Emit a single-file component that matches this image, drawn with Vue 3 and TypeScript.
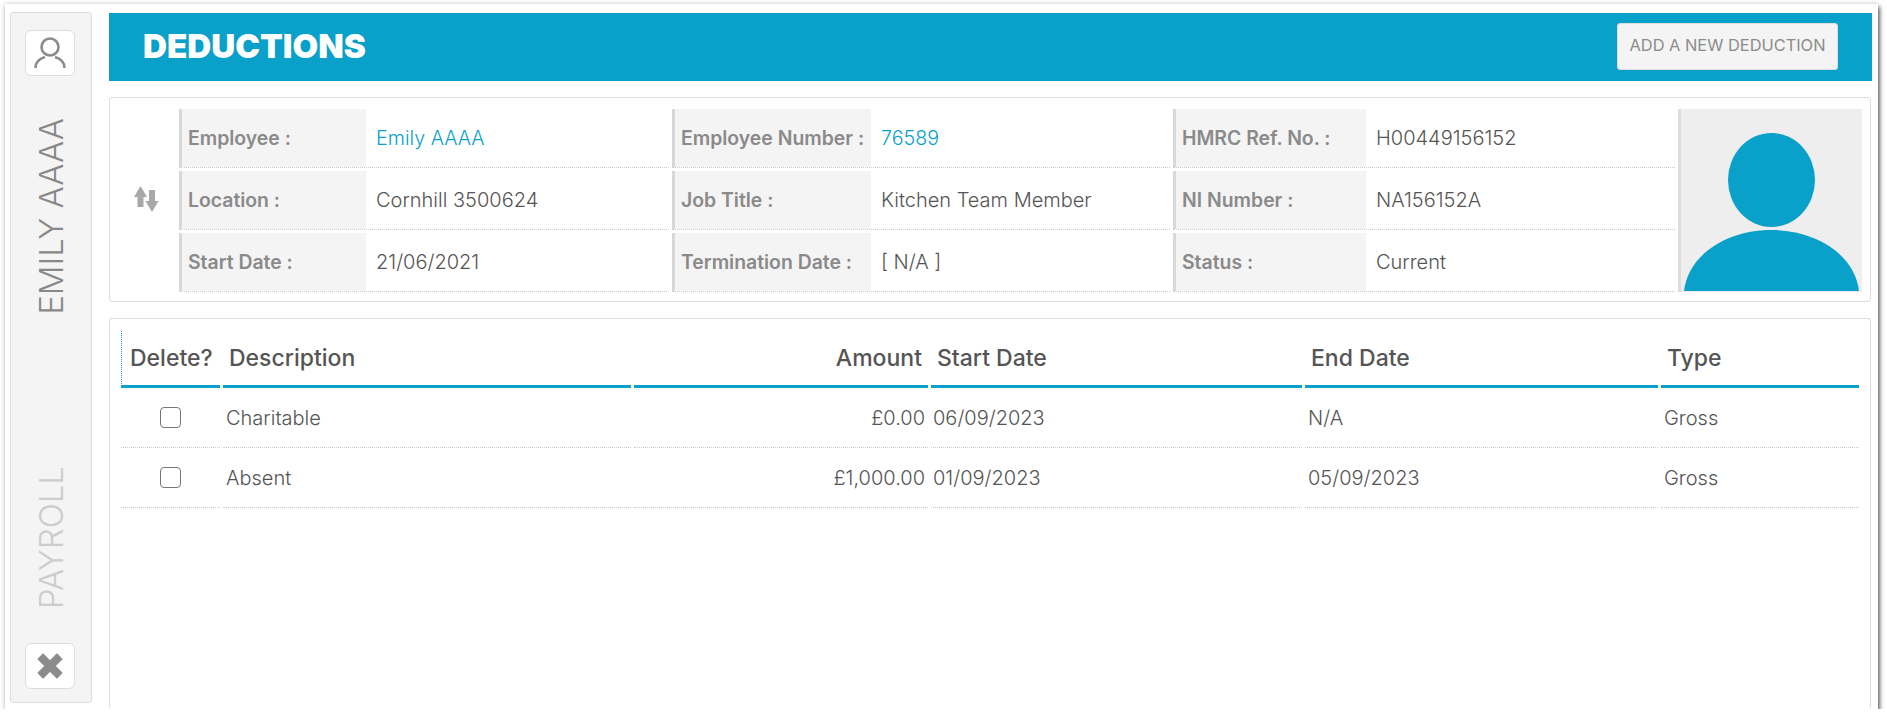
<script setup lang="ts">
const info = [
  [
    { label: 'Employee :', value: 'Emily AAAA', link: true },
    { label: 'Location :', value: 'Cornhill 3500624' },
    { label: 'Start Date :', value: '21/06/2021' },
  ],
  [
    { label: 'Employee Number :', value: '76589', link: true },
    { label: 'Job Title :', value: 'Kitchen Team Member' },
    { label: 'Termination Date :', value: '[ N/A ]' },
  ],
  [
    { label: 'HMRC Ref. No. :', value: 'H00449156152' },
    { label: 'NI Number :', value: 'NA156152A' },
    { label: 'Status :', value: 'Current' },
  ],
]
const rows = [
  { desc: 'Charitable', amount: '£0.00', start: '06/09/2023', end: 'N/A', type: 'Gross' },
  { desc: 'Absent', amount: '£1,000.00', start: '01/09/2023', end: '05/09/2023', type: 'Gross' },
]
</script>

<template>
  <div class="window">
    <aside class="side">
      <button class="side-btn">
        <svg width="32" height="32" viewBox="0 0 32 32" fill="none" stroke="#8c8c8c" stroke-width="2.6">
          <circle cx="16" cy="10" r="8.500" />
          <path d="M1.500 31C1.500 25 6 21.500 11 20M30.500 31C30.500 25 26 21.500 21 20" />
        </svg>
      </button>
      <div class="side-name">EMILY AAAA</div>
      <div class="side-module">PAYROLL</div>
      <button class="side-btn">
        <svg width="30" height="30" viewBox="0 0 26 26"><path d="M3 7l4-4 6 6 6-6 4 4-6 6 6 6-4 4-6-6-6 6-4-4 6-6z" fill="#8c8c8c" stroke="#8c8c8c" stroke-width="1.500" stroke-linejoin="round" /></svg>
      </button>
    </aside>
    <main class="main">
      <header class="banner">
        <h1>DEDUCTIONS</h1>
        <button class="add">ADD A NEW DEDUCTION</button>
      </header>
      <section class="info card">
        <div class="swap">
          <svg width="25" height="26" viewBox="0 0 25 26" fill="#a8a8a8">
            <path d="M6.500 0L13 11H9.500V21H3.500V11H0zM18 26L24.500 15H21V4H15V15H11.500z" />
          </svg>
        </div>
        <div class="info-cols">
          <div v-for="(col, i) in info" :key="i" class="info-col" :class="'c' + i">
            <div v-for="cell in col" :key="cell.label" class="info-row">
              <div class="lbl">{{ cell.label }}</div>
              <div class="val" :class="{ link: cell.link }">{{ cell.value }}</div>
            </div>
          </div>
        </div>
        <div class="photo">
          <svg width="181" height="182" viewBox="0 0 181 182" fill="#09a0c9">
            <ellipse cx="90.500" cy="70" rx="43.500" ry="47" />
            <path d="M3 181C7 146 44 120 90.500 120S174 146 178 181z" />
          </svg>
        </div>
      </section>
      <section class="list card">
        <table>
          <colgroup>
            <col class="w1" /><col class="w2" /><col class="w3" /><col class="w4" /><col class="w5" /><col class="w6" />
          </colgroup>
          <thead>
            <tr>
              <th class="del">Delete?</th>
              <th>Description</th>
              <th class="r">Amount</th>
              <th>Start Date</th>
              <th>End Date</th>
              <th>Type</th>
            </tr>
          </thead>
          <tbody>
            <tr v-for="row in rows" :key="row.desc">
              <td class="center"><span class="check"></span></td>
              <td>{{ row.desc }}</td>
              <td class="r">{{ row.amount }}</td>
              <td class="tight">{{ row.start }}</td>
              <td>{{ row.end }}</td>
              <td>{{ row.type }}</td>
            </tr>
          </tbody>
        </table>
      </section>
    </main>
  </div>
</template>

<style>
html, body { margin: 0; background: #fff; overflow: hidden; }
</style>

<style scoped>
* { box-sizing: border-box; }
.window {
  width: 1873px; height: 705px; margin: 4px 0 0 5px;
  display: flex; background: #fff; overflow: hidden;
  box-shadow: 2px 3px 4px rgba(0,0,0,.55), 0 0 5px rgba(0,0,0,.2);
  font-family: Inter, "Liberation Sans", sans-serif; color: #555;
}
.side {
  width: 82px; height: 691px; margin: 8px 0 0 5px; flex: none;
  background: #f4f4f4; border: 1px solid #ddd; border-radius: 3px;
  display: flex; flex-direction: column; align-items: center; padding: 17px 0 13px;
}
.side-btn {
  width: 50px; height: 46px; padding: 0; background: #fff; border: 1px solid #ddd; border-radius: 6px;
  display: flex; align-items: center; justify-content: center; flex: none; margin-right: 2px;
}
.side-name, .side-module {
  writing-mode: vertical-rl; transform: rotate(180deg);
  font-size: 33px; font-weight: 300; line-height: 36px; white-space: nowrap;
}
.side-name { color: #888; margin-top: 42px; }
.side-module { color: #ccc; margin-top: auto; margin-bottom: 34px; }
.main { flex: none; width: 1763px; margin-left: 17px; padding-top: 9px; display: flex; flex-direction: column; }
.banner {
  height: 68px; background: #09a0c9; display: flex; align-items: center; justify-content: space-between;
  padding: 0 34px 0 34px;
}
h1 { margin: 0; color: #fff; font-size: 33.200px; font-weight: 900; line-height: 1; }
.add {
  width: 221px; height: 47px; background: #f4f4f4; border: 1px solid #ddd; border-radius: 3px; padding: 0 0 2px;
  font: 400 16.400px Inter, sans-serif; color: #8c8c8c; margin-top: -2px;
}
.card { background: #fff; border: 1px solid #ddd; border-radius: 3px; width: 1762px; }
.info { margin-top: 16px; height: 205px; display: flex; padding: 11px 8px 0 0; }
.swap { width: 69px; flex: none; display: flex; align-items: center; justify-content: center; padding: 0 0 4px 4px; height: 183px; }
.info-cols { display: flex; flex: none; width: 1499px; }
.info-col { display: flex; flex-direction: column; gap: 3px; }
.c0 { width: 493px; } .c0 .lbl { width: 187px; }
.c1 { width: 501px; } .c1 .lbl { width: 199px; }
.c2 { width: 505px; } .c2 .lbl { width: 193px; }
.info-row { display: flex; height: 59px; border-bottom: 1px dotted #ccc; margin-right: 3px; }
.lbl {
  background: #f4f4f4; border-left: 3px solid #d8d8d8; padding-left: 6px; margin-right: 3px;
  font-size: 19.400px; font-weight: 600; color: #8a8a8a; display: flex; align-items: center; white-space: nowrap; flex: none;
}
.val { padding-left: 7px; font-size: 20px; font-weight: 350; color: #555; display: flex; align-items: center; white-space: nowrap; }
.val.link { color: #09a0c9; font-size: 19.700px; }
.photo {
  flex: none; width: 184px; height: 183px; background: #eee; border-left: 3px solid #ddd;
  display: flex; align-items: flex-end; justify-content: flex-start; overflow: hidden;
}
.list { margin-top: 16px; flex: 1; border-bottom: 0; padding: 12px 0 0 8px; }
table { border-collapse: separate; border-spacing: 3px 0; table-layout: fixed; width: 1744px; }
.w1 { width: 99px; } .w2 { width: 408px; } .w3 { width: 294px; } .w4 { width: 371px; } .w5 { width: 353px; } .w6 { width: 198px; }
th {
  height: 57px; font-size: 23px; font-weight: 500; color: #555; text-align: left; padding: 0 0 0 6px;
  border-bottom: 3px solid #09a0c9; white-space: nowrap;
}
th.del { border-left: 1px dotted #09a0c9; padding-left: 8px; }
th.r { text-align: right; padding-right: 6px; }
td {
  height: 60px; font-size: 20px; font-weight: 350; color: #555; padding: 0 0 0 3px; border-bottom: 1px dotted #ccc; white-space: nowrap;
}
td.r { text-align: right; padding-right: 3px; }
td.tight { padding-left: 2px; }
td.center { text-align: center; padding-right: 3px; }
.check { display: inline-block; width: 21px; height: 21px; border: 1.500px solid #777; border-radius: 4px; vertical-align: middle; margin-bottom: 2px; }
</style>
